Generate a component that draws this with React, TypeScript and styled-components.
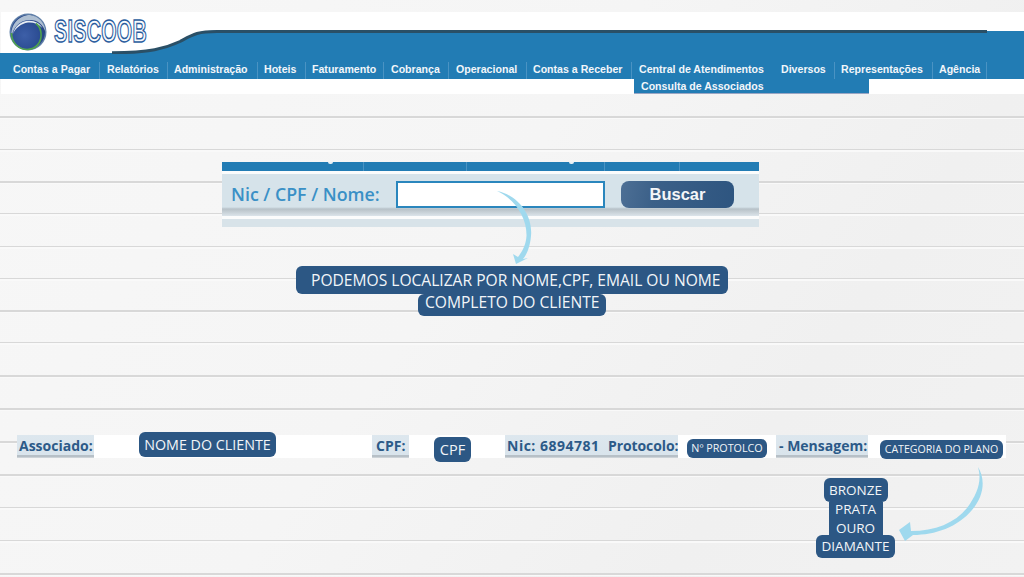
import React from "react";
import styled, { createGlobalStyle } from "styled-components";

const Global = createGlobalStyle`
  html, body { margin: 0; padding: 0; }
  body { width: 1024px; height: 577px; overflow: hidden; font-family: "Liberation Sans", Arial, sans-serif; }
`;

const ruleYs = [116, 149, 181, 213, 246, 278, 310, 342, 375, 408, 441, 474, 507, 540, 573];
const ruleLayers = ruleYs
  .map(
    (y) =>
      `linear-gradient(to bottom, #d8d8d8 0, #d8d8d8 1.5px, #f9f9f9 1.5px, #f9f9f9 2.5px) 0 ${y}px / 100% 3px no-repeat`,
  )
  .join(",\n    ");

const Page = styled.div`
  position: relative;
  width: 1024px;
  height: 577px;
  overflow: hidden;
  padding-top: 12px;
  box-sizing: border-box;
  background:
    ${ruleLayers},
    linear-gradient(125deg, #f7f7f7 0%, #f5f5f5 45%, #f0f0f0 75%, #f2f2f2 100%);
`;

const Header = styled.header`
  position: relative;
  margin-left: 1px;
  background: #fff;
  display: flex;
  flex-direction: column;
`;

const Banner = styled.div`
  position: relative;
  height: 42px;
  display: flex;
  align-items: center;
  padding-left: 8px;
  gap: 7px;
`;

const BannerShape = styled.svg`
  position: absolute;
  left: -1px;
  top: 0;
`;

const Globe = styled.svg`
  position: relative;
  flex: none;
  margin-top: -3px;
`;

const LogoText = styled.span`
  position: relative;
  display: block;
  font: 700 31px/1 "Liberation Sans", Arial, sans-serif;
  color: #f8fafd;
  -webkit-text-stroke: 1.5px #2a5d9e;
  transform: scaleX(0.635);
  transform-origin: left center;
  letter-spacing: 0.5px;
  margin-top: -3px;
  white-space: nowrap;
`;

const Nav = styled.nav`
  height: 25px;
  background: #227cb4;
  margin-left: -1px;
  padding-left: 6px;
  display: flex;
  align-items: flex-end;
`;

const NavItem = styled.a<{ $w: number; $pl: number; $plain?: boolean }>`
  flex: none;
  box-sizing: border-box;
  width: ${(p) => p.$w}px;
  height: 17px;
  padding-left: ${(p) => p.$pl}px;
  font: 700 10.6px/15px "Liberation Sans", Arial, sans-serif;
  color: #f2f6fa;
  white-space: nowrap;
  border-right: 1px solid ${(p) => (p.$plain ? "transparent" : "#4a93c3")};
`;

const SubStrip = styled.div`
  height: 15px;
`;

const Dropdown = styled.div`
  position: absolute;
  left: 633px;
  top: 67px;
  width: 235px;
  height: 15px;
  box-sizing: border-box;
  padding-left: 7px;
  background: #227cb4;
  border-bottom: 1px solid #9aa6c4;
  font: 700 10.6px/14px "Liberation Sans", Arial, sans-serif;
  color: #f2f6fa;
  white-space: nowrap;
`;

const Search = styled.section`
  width: 537px;
  margin: 68px 0 0 222px;
  display: flex;
  flex-direction: column;
  background: #fbfcfc;
`;

const SearchStrip = styled.div`
  height: 9px;
  background: #227cb4;
  display: flex;
`;

const StripCell = styled.div<{ $w: number; $mark: number }>`
  position: relative;
  flex: none;
  box-sizing: border-box;
  width: ${(p) => p.$w}px;
  border-right: 1px solid #4a93c3;
  &::after {
    content: "";
    position: absolute;
    top: 0;
    left: ${(p) => p.$mark}px;
    width: ${(p) => (p.$mark ? 5 : 0)}px;
    height: 2px;
    border-radius: 0 0 3px 3px;
    background: #e8f0f5;
  }
`;

const SearchBody = styled.form`
  margin-top: 3px;
  height: 42px;
  box-sizing: border-box;
  padding: 7px 0 0 9px;
  background: linear-gradient(to bottom, #d6e3ea 0, #d6e3ea 33px, #b7c1c8 35px, #bcc6cc 36px, #dbe4ea 42px);
  display: flex;
  align-items: flex-start;
`;

const SearchLabel = styled.label`
  flex: none;
  width: 165px;
  font: 600 17.8px/27px "Open Sans", sans-serif;
  color: #3a90c6;
  white-space: nowrap;
`;

const SearchInput = styled.input`
  flex: none;
  box-sizing: border-box;
  width: 209px;
  height: 27px;
  padding: 0;
  background: #fff;
  border: 2px solid #2a86bd;
  outline: none;
`;

const SearchButton = styled.button`
  flex: none;
  width: 113px;
  height: 27px;
  margin-left: 16px;
  border: 0;
  border-radius: 8px;
  background: linear-gradient(100deg, #4d6f95 0%, #3b6088 30%, #2e5580 100%);
  font: 700 16.5px/27px "Liberation Sans", Arial, sans-serif;
  color: #f4f6f8;
  padding: 0;
`;

const SearchFoot = styled.div`
  margin-top: 3px;
  height: 8px;
  background: #d8e3e9;
`;

const Callout = styled.div`
  margin-top: 39px;
  display: flex;
  flex-direction: column;
  align-items: center;
`;

const CalloutLine = styled.div<{ $w: number; $h: number; $lh: number; $pl: number }>`
  box-sizing: border-box;
  width: ${(p) => p.$w}px;
  height: ${(p) => p.$h}px;
  padding-left: ${(p) => p.$pl}px;
  background: #2c5784;
  border-radius: 6px;
  font: 400 15.6px/${(p) => p.$lh}px "Open Sans", sans-serif;
  color: #f2f5f8;
  white-space: nowrap;
`;

const DataBar = styled.section`
  width: 989px;
  height: 23px;
  margin: 119px 0 0 17px;
  display: flex;
`;

const FieldLabel = styled.div<{ $w: number; $pl: number; $ls?: number }>`
  flex: none;
  box-sizing: border-box;
  width: ${(p) => p.$w}px;
  padding: 1px 0 0 ${(p) => p.$pl}px;
  background: linear-gradient(to bottom, #dde7ee 0, #d9e4ec 20px, #b7c0c7 20.5px, #b7c0c7 22px, #e3e6e8 23px);
  font: 700 14px/20px "Open Sans", sans-serif;
  letter-spacing: ${(p) => p.$ls ?? 0}px;
  color: #2c5a88;
  white-space: pre;
`;

const FieldValue = styled.div<{ $w: number }>`
  position: relative;
  flex: none;
  width: ${(p) => p.$w}px;
  background: #fff;
`;

const Tag = styled.span<{ $l: number; $t: number; $w: number; $h: number; $fs: number }>`
  position: absolute;
  left: ${(p) => p.$l}px;
  top: ${(p) => p.$t}px;
  width: ${(p) => p.$w}px;
  height: ${(p) => p.$h}px;
  background: #2c5784;
  border-radius: 6px;
  text-align: center;
  font: 400 ${(p) => p.$fs}px/${(p) => p.$h}px "Open Sans", sans-serif;
  color: #f2f5f8;
  white-space: nowrap;
`;

const Plans = styled.div`
  width: 79px;
  margin: 20px 0 0 816px;
  display: flex;
  flex-direction: column;
  align-items: center;
`;

const Plan = styled.div<{ $w: number; $h: number; $lh: number; $r: number }>`
  width: ${(p) => p.$w}px;
  height: ${(p) => p.$h}px;
  background: #2c5784;
  border-radius: ${(p) => p.$r}px;
  text-align: center;
  font: 400 13.5px/${(p) => p.$lh}px "Open Sans", sans-serif;
  color: #f2f5f8;
`;

const Arrow = styled.svg`
  position: absolute;
  left: 0;
  top: 0;
  pointer-events: none;
`;

const menu: [string, number, number, boolean?][] = [
  ["Contas a Pagar", 94, 7],
  ["Relatórios", 68, 7],
  ["Administração", 90, 6],
  ["Hoteis", 48, 6],
  ["Faturamento", 78, 6],
  ["Cobrança", 65, 7],
  ["Operacional", 78, 7],
  ["Contas a Receber", 105, 6],
  ["Central de Atendimentos", 142, 7, true],
  ["Diversos", 61, 7],
  ["Representações", 98, 6],
  ["Agência", 54, 6],
];

export default function App() {
  return (
    <Page>
      <Global />
      <Header>
        <Banner>
          <BannerShape width="1024" height="42" viewBox="0 0 1024 42">
            <path d="M0 42 L0 41 L110 41 C150 41 165 37 180 30 C193 23 197 18.5 217 18.5 L1024 18.5 L1024 42 Z" fill="#227cb4" />
            <path d="M112 40.8 C150 40.5 165 36.5 180 29.5 C193 22.5 197 19.5 217 19.5 L987 19.5" fill="none" stroke="#2a4f66" strokeWidth="3" />
            <rect x="987" y="0" width="37" height="19" fill="#fff" />
          </BannerShape>
          <Globe width="38" height="38" viewBox="0 0 38 38">
            <defs>
              <radialGradient id="g" cx="0.4" cy="0.6" r="0.65">
                <stop offset="0" stopColor="#3d5fa8" />
                <stop offset="0.7" stopColor="#2b4c92" />
                <stop offset="1" stopColor="#24407c" />
              </radialGradient>
            </defs>
            <circle cx="19" cy="19" r="18.5" fill="#5f7fa8" />
            <circle cx="19" cy="19" r="17" fill="url(#g)" />
            <path d="M2.5 24 C1 12 10 2 21 2 C30 3 36 10 36.5 19 C34 11 28 6.5 20 7 C10 7.5 4 15 2.5 24 Z" fill="#aebfd2" />
            <path d="M4 21 C6 13 12 8 20 7.8 C26 7.6 31 10.5 33.5 15 C29 10.5 24 9 19 9.5 C12 10.5 6.5 15 4 21 Z" fill="#e8eef4" />
            <path d="M2.5 20 C2.5 30 10 36.5 18 36.5 C27 36.5 33 29 32 20 C31.5 15 29 12 27 10.5" fill="none" stroke="#4fa24c" strokeWidth="1.6" />
          </Globe>
          <LogoText>SISCOOB</LogoText>
        </Banner>
        <Nav>
          {menu.map(([label, w, pl, plain]) => (
            <NavItem key={label} $w={w} $pl={pl} $plain={plain}>{label}</NavItem>
          ))}
        </Nav>
        <SubStrip />
        <Dropdown>Consulta de Associados</Dropdown>
      </Header>

      <Search>
        <SearchStrip>
          <StripCell $w={142} $mark={106} />
          <StripCell $w={103} $mark={0} />
          <StripCell $w={138} $mark={102} />
          <StripCell $w={75} $mark={0} />
        </SearchStrip>
        <SearchBody>
          <SearchLabel>Nic / CPF / Nome:</SearchLabel>
          <SearchInput />
          <SearchButton type="button">Buscar</SearchButton>
        </SearchBody>
        <SearchFoot />
      </Search>

      <Callout>
        <CalloutLine $w={432} $h={28} $lh={28} $pl={15}>PODEMOS LOCALIZAR POR NOME,CPF, EMAIL OU NOME</CalloutLine>
        <CalloutLine $w={188} $h={22} $lh={17} $pl={7}>COMPLETO DO CLIENTE</CalloutLine>
      </Callout>

      <DataBar>
        <FieldLabel $w={77} $pl={2}>Associado:</FieldLabel>
        <FieldValue $w={278}>
          <Tag $l={45} $t={-3} $w={137} $h={25} $fs={14.3}>NOME DO CLIENTE</Tag>
        </FieldValue>
        <FieldLabel $w={37} $pl={4}>CPF:</FieldLabel>
        <FieldValue $w={96}>
          <Tag $l={25} $t={2} $w={37} $h={25} $fs={14.5}>CPF</Tag>
        </FieldValue>
        <FieldLabel $w={103} $pl={2} $ls={0.5}>Nic: 6894781</FieldLabel>
        <FieldLabel $w={70} $pl={0} $ls={-0.1}>Protocolo:</FieldLabel>
        <FieldValue $w={98}>
          <Tag $l={9} $t={4} $w={80} $h={19} $fs={10.75}>Nº PROTOLCO</Tag>
        </FieldValue>
        <FieldLabel $w={92} $pl={3}>- Mensagem:</FieldLabel>
        <FieldValue $w={138}>
          <Tag $l={12} $t={5} $w={123} $h={19} $fs={10.6}>CATEGORIA DO PLANO</Tag>
        </FieldValue>
      </DataBar>

      <Plans>
        <Plan $w={64} $h={24} $lh={24} $r={6}>BRONZE</Plan>
        <Plan $w={54} $h={19} $lh={14} $r={0}>PRATA</Plan>
        <Plan $w={54} $h={14} $lh={14} $r={0}>OURO</Plan>
        <Plan $w={79} $h={23} $lh={23} $r={6}>DIAMANTE</Plan>
      </Plans>

      <Arrow width="1024" height="577" viewBox="0 0 1024 577">
        <path d="M497 191 C518 195 533 215 531 236 C530 247 527 254 523 259 L528 258 L516 264 L513 254 L518 257 C522 252 526 245 526.5 236 C527 218 515 199 497 191 Z" fill="#9fd9ee" />
        <path d="M978 467 C985 478 985 495 972 510 C958 527 935 535 913 535 L905 541 L899 530 L910 522 L911 531 C935 531 955 523 967 508 C978 493 982 480 978 467 Z" fill="#9fd9ee" />
      </Arrow>
    </Page>
  );
}
